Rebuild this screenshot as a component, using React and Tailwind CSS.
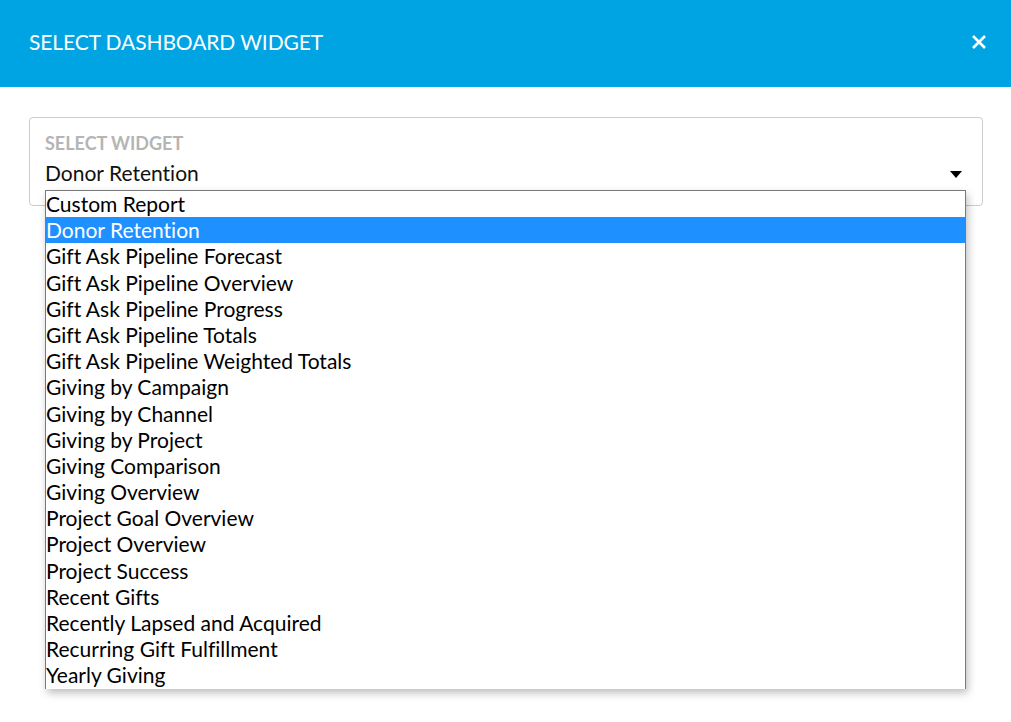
import React from "react";

const options = [
  "Custom Report",
  "Donor Retention",
  "Gift Ask Pipeline Forecast",
  "Gift Ask Pipeline Overview",
  "Gift Ask Pipeline Progress",
  "Gift Ask Pipeline Totals",
  "Gift Ask Pipeline Weighted Totals",
  "Giving by Campaign",
  "Giving by Channel",
  "Giving by Project",
  "Giving Comparison",
  "Giving Overview",
  "Project Goal Overview",
  "Project Overview",
  "Project Success",
  "Recent Gifts",
  "Recently Lapsed and Acquired",
  "Recurring Gift Fulfillment",
  "Yearly Giving",
];

export default function App() {
  const selected = "Donor Retention";

  return (
    <div className="w-[1011px] h-[722px] bg-white font-['Lato',sans-serif] [font-variant-ligatures:none] overflow-hidden">
      <div className="h-[87px] bg-[#00a4e3] flex items-center justify-between pl-[29px] pr-[24px] pb-[3px]">
        <h1 className="text-white text-[21px] tracking-[-0.1px]">SELECT DASHBOARD WIDGET</h1>
        <svg width="16" height="16" viewBox="0 0 16 16" className="text-white">
          <path d="M2 2 L14 14 M14 2 L2 14" stroke="currentColor" strokeWidth="2.6" />
        </svg>
      </div>

      <div className="pl-[29px] pr-[28px] pt-[30px]">
        <div className="relative h-[89px] border border-[#cccccc] rounded-[4px] pl-[15px] pr-[20px] pt-[13px]">
          <div className="text-[#b5b5b5] text-[18px] font-bold leading-[24px]">SELECT WIDGET</div>
          <div className="flex items-center justify-between mt-[5px]">
            <span className="text-[#111] text-[21px] leading-[26px]">{selected}</span>
            <svg width="12" height="7" viewBox="0 0 12 7" className="mt-[2px]">
              <path d="M0 0 H12 L6 7 Z" fill="#000" />
            </svg>
          </div>

          <ul className="absolute left-[15px] top-[72px] w-[921px] bg-white border-l border-t border-r border-[#7a7a7a] shadow-[2px_4px_8px_rgba(0,0,0,0.25)] z-10">
            {options.map((o) => (
              <li
                key={o}
                className={
                  o === selected
                    ? "h-[26.2px] leading-[26px] text-[21px] bg-[#1e90ff] text-white"
                    : "h-[26.2px] leading-[26px] text-[21px] text-black"
                }
              >
                {o}
              </li>
            ))}
          </ul>
        </div>
      </div>
    </div>
  );
}
